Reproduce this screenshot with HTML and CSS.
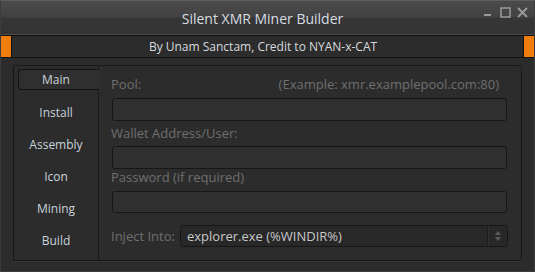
FILE: index.html
```html
<!DOCTYPE html>
<html>
<head>
<meta charset="utf-8">
<link rel="stylesheet" href="styles.css">
</head>
<body>
<div class="window">
  <div class="titlebar">
    <div class="title">Silent XMR Miner Builder</div>
    <div class="controls">
      <svg class="ctl" width="12" height="12" viewBox="0 0 12 12"><rect x="1" y="7" width="7" height="2" fill="#9a9a9a"/></svg>
      <svg class="ctl" width="12" height="12" viewBox="0 0 12 12"><rect x="1" y="1" width="9" height="9" fill="none" stroke="#9a9a9a" stroke-width="1.5"/></svg>
      <svg class="ctl" width="12" height="12" viewBox="0 0 12 12"><path d="M1 1 L10 10 M10 1 L1 10" stroke="#9a9a9a" stroke-width="1.8"/></svg>
    </div>
  </div>
  <div class="subbar">
    <div class="accent"></div>
    <div class="subtitle">By Unam Sanctam, Credit to NYAN-x-CAT</div>
    <div class="accent right"></div>
  </div>
  <div class="main">
    <div class="frame">
      <div class="tabs">
        <div class="tab active">Main</div>
        <div class="tab">Install</div>
        <div class="tab">Assembly</div>
        <div class="tab">Icon</div>
        <div class="tab">Mining</div>
        <div class="tab">Build</div>
      </div>
      <div class="content">
        <div class="label row1"><span>Pool:</span><span>(Example: xmr.examplepool.com:80)</span></div>
        <div class="input in1"></div>
        <div class="label row2"><span>Wallet Address/User:</span></div>
        <div class="input in2"></div>
        <div class="label row3"><span>Password (if required)</span></div>
        <div class="input in3"></div>
        <div class="inject">
          <span class="label-inline">Inject Into:</span>
          <div class="select">
            <span class="select-text">explorer.exe (%WINDIR%)</span>
            <span class="spin">
              <svg width="8" height="12" viewBox="0 0 8 12"><path d="M4 1 L7 5 L1 5 Z" fill="#5c5c5c"/><path d="M1 7 L7 7 L4 11 Z" fill="#5c5c5c"/></svg>
            </span>
          </div>
        </div>
      </div>
    </div>
  </div>
</div>
</body>
</html>
```
FILE: styles.css
```css
* { box-sizing: border-box; }
html, body { margin: 0; padding: 0; background: #2b2b2b; }
body { font-family: "Open Sans", "Noto Sans", sans-serif; }

.window {
  width: 535px;
  height: 272px;
  border: 1px solid #3c3c3c;
  border-top-color: #5e5e5e;
  background: #2c2c2c;
  display: flex;
  flex-direction: column;
}

.titlebar {
  height: 34px;
  flex: none;
  background: linear-gradient(#4a4a4a 0, #424242 16px, #363636 17px, #333333 33px);
  border-bottom: 1px solid #4b4b4b;
  display: grid;
  grid-template-columns: 1fr auto 1fr;
  align-items: center;
  position: relative;
}
.title {
  grid-column: 2;
  color: #d8dde2;
  font-size: 14px;
  padding-right: 10px;
  padding-top: 1px;
}
.controls {
  grid-column: 3;
  justify-self: end;
  align-self: start;
  display: flex;
  gap: 5px;
  padding: 6px 5px 0 0;
}
.ctl { display: block; }

.subbar {
  height: 23px;
  flex: none;
  display: flex;
  border-top: 1px solid #121212;
  border-bottom: 1px solid #121212;
  background: #2c2c2c;
}
.accent {
  width: 11px;
  background: #f07d0c;
  border-right: 1px solid #0e0e0e;
}
.accent.right {
  border-right: none;
  border-left: 1px solid #0e0e0e;
}
.subtitle {
  flex: 1;
  text-align: center;
  color: #d6dadf;
  font-size: 12px;
  line-height: 21px;
  padding-right: 9px;
}

.main {
  flex: 1;
  padding: 7px 12px 0 12px;
  background: #2c2c2c;
}

.frame {
  height: 196px;
  display: grid;
  grid-template-columns: 85px 1fr;
  border: 1px solid #181818;
  border-radius: 0 3px 3px 0;
  background: #2c2c2c;
  box-shadow: 0 1px 0 #353535;
}

.tabs {
  border-right: 1px solid #1a1a1a;
  padding-top: 3px;
  display: flex;
  flex-direction: column;
  gap: 11px;
}
.tab {
  height: 21px;
  line-height: 20px;
  text-align: center;
  color: #c9d2da;
  font-size: 12px;
  margin-left: 4px;
  padding-right: 4px;
}
.tab.active {
  border: 1px solid #141414;
  border-right: none;
  border-radius: 3px 0 0 3px;
  background: #2f2f2f;
  margin-right: -1px;
  margin-bottom: 2px;
  padding-right: 6px;
}

.content {
  padding: 10px 14px 0 12px;
}

.label {
  display: flex;
  justify-content: space-between;
  color: #6f6f6f;
  font-size: 13px;
  line-height: 16px;
}
.label span:last-child { padding-right: 8px; }
.row1 { margin-bottom: 6px; }
.row2 { margin-top: 4px; margin-bottom: 5px; }
.row3 { margin-top: 0; margin-bottom: 6px; }

.input {
  height: 23px;
  margin-left: 1px;
  border: 1px solid #161616;
  border-radius: 3px;
  background: #2f2f2f;
}
.in3 { height: 22px; }

.inject {
  display: flex;
  align-items: center;
  margin-top: 12px;
}
.label-inline {
  color: #6f6f6f;
  font-size: 13px;
  width: 69px;
}
.select {
  flex: 1;
  height: 22px;
  display: flex;
  border: 1px solid #161616;
  border-radius: 3px;
  background: #282828;
  margin-right: -1px;
}
.select-text {
  flex: 1;
  color: #c7c7c7;
  font-size: 13px;
  line-height: 20px;
  padding-left: 6px;
}
.spin {
  width: 20px;
  border-left: 1px solid #1c1c1c;
  box-shadow: inset 1px 0 0 #333;
  display: flex;
  align-items: center;
  justify-content: center;
}
.spin svg { display: block; }
```
